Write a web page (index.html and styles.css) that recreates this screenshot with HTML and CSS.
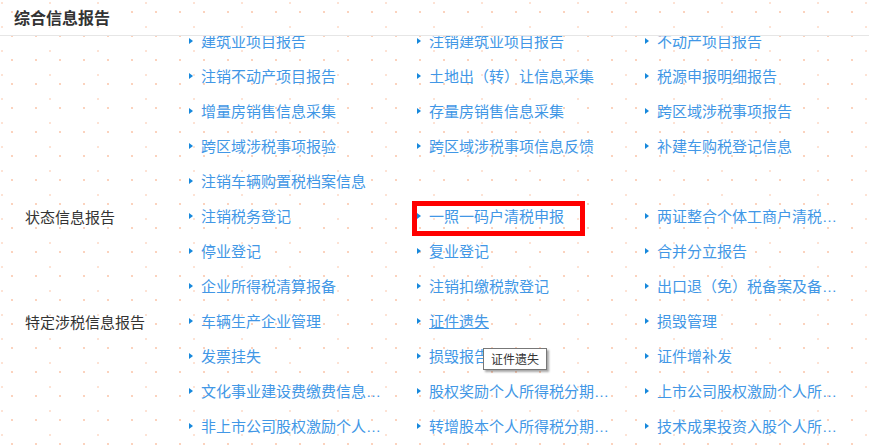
FILE: index.html
```html
<!DOCTYPE html>
<html lang="zh-CN">
<head>
    <meta charset="UTF-8">
    <meta name="viewport" content="width=device-width, initial-scale=1.0">
    <title>综合信息报告</title>
    <link rel="stylesheet" href="styles.css">
</head>
<body>
    <div class="panel">
        <div class="panel-header">综合信息报告</div>

        <div class="panel-body">
            <div class="report-list">
                <!-- 上一组，标题已滚出可视区 -->
                <div class="group">
                    <div class="group-label"></div>
                    <div class="group-items">
                        <div class="item"><a href="#">建筑业项目报告</a></div>
                        <div class="item"><a href="#">注销建筑业项目报告</a></div>
                        <div class="item"><a href="#">不动产项目报告</a></div>
                        <div class="item"><a href="#">注销不动产项目报告</a></div>
                        <div class="item"><a href="#">土地出（转）让信息采集</a></div>
                        <div class="item"><a href="#">税源申报明细报告</a></div>
                        <div class="item"><a href="#">增量房销售信息采集</a></div>
                        <div class="item"><a href="#">存量房销售信息采集</a></div>
                        <div class="item"><a href="#">跨区域涉税事项报告</a></div>
                        <div class="item"><a href="#">跨区域涉税事项报验</a></div>
                        <div class="item"><a href="#">跨区域涉税事项信息反馈</a></div>
                        <div class="item"><a href="#">补建车购税登记信息</a></div>
                        <div class="item"><a href="#">注销车辆购置税档案信息</a></div>
                    </div>
                </div>

                <div class="group">
                    <div class="group-label">状态信息报告</div>
                    <div class="group-items">
                        <div class="item"><a href="#">注销税务登记</a></div>
                        <div class="item is-marked"><a href="#">一照一码户清税申报</a></div>
                        <div class="item"><a href="#">两证整合个体工商户清税申报</a></div>
                        <div class="item"><a href="#">停业登记</a></div>
                        <div class="item"><a href="#">复业登记</a></div>
                        <div class="item"><a href="#">合并分立报告</a></div>
                        <div class="item"><a href="#">企业所得税清算报备</a></div>
                        <div class="item"><a href="#">注销扣缴税款登记</a></div>
                        <div class="item"><a href="#">出口退（免）税备案及备案变更</a></div>
                    </div>
                </div>

                <div class="group">
                    <div class="group-label">特定涉税信息报告</div>
                    <div class="group-items">
                        <div class="item"><a href="#">车辆生产企业管理</a></div>
                        <div class="item is-hover">
                            <a href="#">证件遗失</a>
                            <span class="tooltip">证件遗失</span>
                        </div>
                        <div class="item"><a href="#">损毁管理</a></div>
                        <div class="item"><a href="#">发票挂失</a></div>
                        <div class="item"><a href="#">损毁报告</a></div>
                        <div class="item"><a href="#">证件增补发</a></div>
                        <div class="item"><a href="#">文化事业建设费缴费信息报告</a></div>
                        <div class="item"><a href="#">股权奖励个人所得税分期缴纳备案</a></div>
                        <div class="item"><a href="#">上市公司股权激励个人所得税延期纳税备案</a></div>
                        <div class="item"><a href="#">非上市公司股权激励个人所得税递延纳税备案</a></div>
                        <div class="item"><a href="#">转增股本个人所得税分期缴纳备案</a></div>
                        <div class="item"><a href="#">技术成果投资入股个人所得税递延纳税备案</a></div>
                    </div>
                </div>
            </div>
        </div>
    </div>
</body>
</html>
```

FILE: styles.css
```css
* {
    margin: 0;
    padding: 0;
    box-sizing: border-box;
    font-family: 'Noto Sans CJK SC', 'Microsoft YaHei', sans-serif;
}

body {
    width: 869px;
    height: 447px;
    overflow: hidden;
    background: #fff;
}

.panel {
    height: 447px;
    display: flex;
    flex-direction: column;
    background-image:
        radial-gradient(circle at 12px 12px, #fbd2bd 0.7px, transparent 1.3px),
        radial-gradient(circle at 2px 3px, #fde2d4 0.7px, transparent 1.3px);
    background-size: 24px 24px, 48px 24px;
}

.panel-header {
    height: 36px;
    line-height: 35px;
    padding-left: 14px;
    font-size: 16px;
    font-weight: bold;
    color: #333;
    border-bottom: 1px solid #e6e6e6;
}

.panel-body {
    flex: 1;
    overflow: hidden;
}

.report-list {
    margin-top: -12px;
}

.group {
    display: grid;
    grid-template-columns: 187px 1fr;
}

.group-label {
    padding-left: 25px;
    line-height: 35px;
    font-size: 15px;
    color: #333;
}

.group-items {
    display: grid;
    grid-template-columns: 228px 228px 226px;
}

.item {
    position: relative;
    height: 35px;
    line-height: 35px;
    padding-left: 14px;
    font-size: 15px;
}

.item::before {
    content: '';
    position: absolute;
    left: 2px;
    top: 14px;
    border-left: 4px solid #1688dc;
    border-top: 3.5px solid transparent;
    border-bottom: 3.5px solid transparent;
}

.item a {
    display: inline-block;
    max-width: 182px;
    vertical-align: top;
    white-space: nowrap;
    overflow: hidden;
    text-overflow: ellipsis;
    color: #4197e6;
    text-decoration: none;
    /* 省略号用西文字体，落在基线上 */
    font-family: 'Liberation Sans', 'Noto Sans CJK SC', sans-serif;
}

.is-hover a {
    text-decoration: underline;
}

.is-marked::after {
    content: '';
    position: absolute;
    left: -3px;
    top: 2px;
    width: 173px;
    height: 35px;
    box-sizing: border-box;
    border: 5px solid #f00;
}

.tooltip {
    position: absolute;
    left: 68px;
    top: 44px;
    z-index: 2;
    padding: 0 7px;
    height: 22px;
    line-height: 20px;
    font-size: 12px;
    color: #333;
    white-space: nowrap;
    background: #fff;
    border: 1px solid #777;
    box-shadow: 2px 2px 2px rgba(0, 0, 0, 0.35);
}
```
